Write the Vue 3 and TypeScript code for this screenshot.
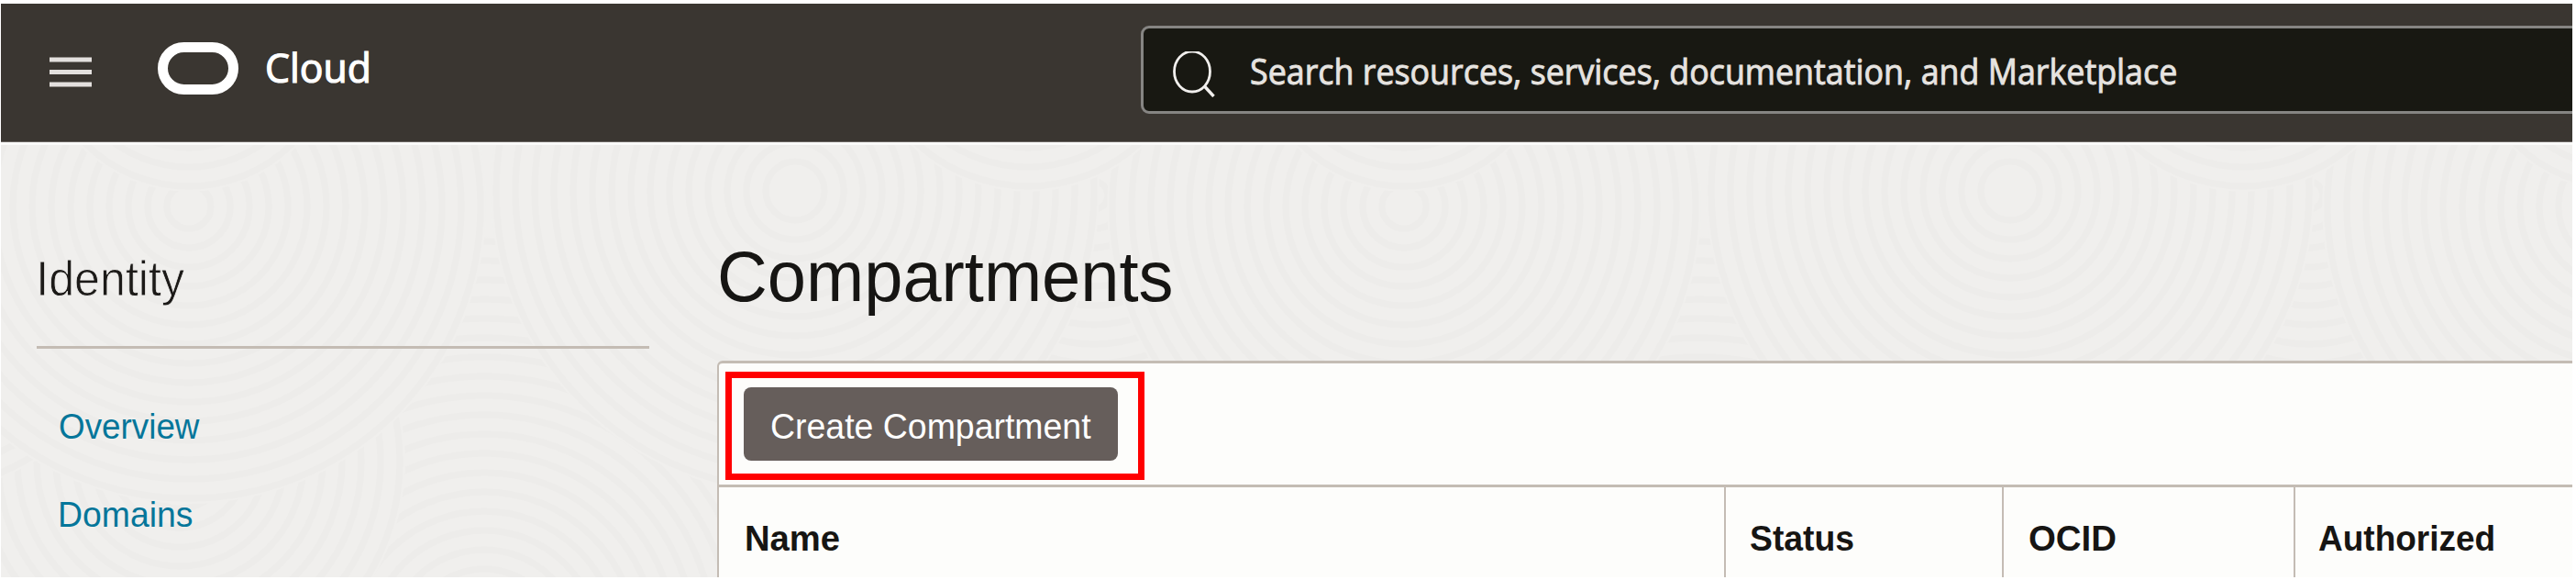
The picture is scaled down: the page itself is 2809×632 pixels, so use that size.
<script setup lang="ts">
interface TextFit {
  width: number
}

interface RingCluster {
  x: number
  y: number
  r: number
}

interface Column {
  label: string
  size: number
  ink: number
  inset: number
}

const navItems = [
  { label: 'Overview', ink: 153, inset: 0 },
  { label: 'Domains', ink: 143.5, inset: 1.5 },
]

const columns: Column[] = [
  { label: 'Name', size: 1098, ink: 101, inset: 29.5 },
  { label: 'Status', size: 302.5, ink: 112, inset: 27 },
  { label: 'OCID', size: 318, ink: 93.5, inset: 28 },
  { label: 'Authorized', size: 304, ink: 191, inset: 25 },
]

// Ring clusters of the engraved page background, painted back to front.
const TILE = 1325
const clusters: RingCluster[] = [
  { x: 527, y: 700, r: 440 },
  { x: 195, y: 500, r: 240 },
  { x: 1192, y: 210, r: 330 },
  { x: 205, y: 222, r: 318 },
  { x: 866, y: 205, r: 326 },
  { x: 205, y: 40, r: 160 },
  { x: 1120, y: 20, r: 180 },
]

function rings(r: number): number[] {
  const out: number[] = []
  for (let v = r; v > 12; v -= 21) out.push(v)
  return out
}

// Scales a label horizontally so that its drawn glyphs span the given width.
const vFit = {
  mounted(el: HTMLElement, binding: { value: TextFit['width'] }) {
    const ctx = document.createElement('canvas').getContext('2d')
    if (!ctx) return
    const cs = getComputedStyle(el)
    ctx.font = `${cs.fontWeight} ${cs.fontSize} ${cs.fontFamily}`
    const m = ctx.measureText(el.textContent ?? '')
    const ink = m.actualBoundingBoxLeft + m.actualBoundingBoxRight
    const scale = binding.value / ink
    el.style.transform = `translateX(${m.actualBoundingBoxLeft * scale}px) scaleX(${scale})`
  },
}
</script>

<template>
  <div class="page">
    <header class="topbar">
      <svg class="menu" width="46" height="34" viewBox="0 0 46 34">
        <path d="M0 3h46M0 16.5h46M0 30h46" stroke="#e3e0de" stroke-width="5.2" />
      </svg>
      <svg class="logo" width="88" height="57" viewBox="0 0 88 57">
        <rect x="5.5" y="5.5" width="77" height="46" rx="23" fill="none" stroke="#fff" stroke-width="11" />
      </svg>
      <div class="brand"><span v-fit="110.5" class="fit">Cloud</span></div>
      <div class="search">
        <svg class="glass" width="48" height="50" viewBox="0 0 48 50">
          <ellipse cx="21" cy="22" rx="19.5" ry="22" fill="none" stroke="#f1efed" stroke-width="2.8" />
          <path d="M34 37.5L44.500 49" stroke="#f1efed" stroke-width="3.4" />
        </svg>
        <div class="hint"><span v-fit="1009" class="fit">Search resources, services, documentation, and Marketplace</span></div>
      </div>
    </header>

    <div class="body">
      <svg class="texture" width="2804" height="474">
        <defs>
          <pattern id="engraving" :width="TILE" height="640" patternUnits="userSpaceOnUse" y="-155">
            <g v-for="(c, i) in clusters" :key="i">
              <g v-for="shift in [-TILE, 0, TILE]" :key="shift">
                <circle :cx="c.x + shift" :cy="c.y" :r="c.r + 6" fill="#f0efed" />
                <circle
                  v-for="r in rings(c.r)"
                  :key="r"
                  :cx="c.x + shift"
                  :cy="c.y"
                  :r="r"
                  fill="none"
                  stroke="#edecea"
                  stroke-width="7"
                />
              </g>
            </g>
          </pattern>
        </defs>
        <rect width="2804" height="474" fill="url(#engraving)" />
      </svg>

      <nav class="side">
        <h2 class="side-title"><span v-fit="158.5" class="fit">Identity</span></h2>
        <ul class="links">
          <li v-for="item in navItems" :key="item.label">
            <a class="link" :style="{ paddingLeft: item.inset + 'px' }">
              <span v-fit="item.ink" class="fit">{{ item.label }}</span>
            </a>
          </li>
        </ul>
      </nav>

      <main class="main">
        <h1 class="title"><span v-fit="492" class="fit">Compartments</span></h1>
        <section class="panel">
          <div class="toolbar">
            <div class="callout">
              <button class="create"><span v-fit="349" class="fit">Create Compartment</span></button>
            </div>
          </div>
          <div class="thead">
            <div
              v-for="col in columns"
              :key="col.label"
              class="th"
              :style="{ width: col.size + 'px', paddingLeft: col.inset + 'px' }"
            >
              <span v-fit="col.ink" class="fit">{{ col.label }}</span>
            </div>
          </div>
        </section>
      </main>
    </div>
  </div>
</template>

<style>
body {
  margin: 0;
  background: #fff;
}
</style>

<style scoped>
.page {
  box-sizing: border-box;
  width: 2809px;
  height: 632px;
  padding: 4px 4px 3px 1px;
  overflow: hidden;
  background: #fff;
  font-family: "Liberation Sans", Arial, sans-serif;
  color: #161513;
}
.fit {
  display: inline-block;
  white-space: nowrap;
  transform-origin: left center;
}
.topbar {
  display: flex;
  box-sizing: border-box;
  height: 151px;
  overflow: hidden;
  background: #3a3631;
  border-bottom: 1px solid #6b6663;
}
.menu {
  flex: none;
  margin: 57.5px 0 0 53px;
}
.logo {
  flex: none;
  margin: 42px 0 0 71.5px;
}
.brand {
  flex: none;
  width: 953.5px;
  margin-left: 31px;
  font: 400 43px/139px "Open Sans", sans-serif;
  color: #fff;
  -webkit-text-stroke: 1.2px #fff;
}
.search {
  display: flex;
  flex: none;
  box-sizing: border-box;
  width: 1600px;
  height: 96px;
  margin-top: 24px;
  border: 3px solid #868583;
  border-radius: 9px;
  background: #181812;
}
.glass {
  flex: none;
  margin: 25px 0 0 31.5px;
}
.hint {
  margin-left: 37px;
  font: 400 38px/93px "Open Sans", sans-serif;
  color: #e6e3e0;
  -webkit-text-stroke: 0.9px #e6e3e0;
}
.body {
  position: relative;
  display: flex;
  box-sizing: border-box;
  height: 474px;
  overflow: hidden;
  background: #f0efed;
  border-top: 3px solid #fafaf9;
}
.texture {
  position: absolute;
  top: 0;
  left: 0;
}
.side {
  position: relative;
  flex: none;
  width: 668px;
  margin-left: 39px;
  padding-top: 116px;
}
.side-title {
  height: 103px;
  margin: 0;
  padding-left: 2.5px;
  border-bottom: 3px solid #c4bcb4;
  font-size: 53px;
  font-weight: 400;
  line-height: 60px;
  color: #1c1a18;
  -webkit-text-stroke: 0.8px #f0efed;
}
.links {
  margin: 37px 0 0;
  padding: 0 0 0 24.500px;
  list-style: none;
}
.link {
  display: block;
  height: 96px;
  font-size: 38px;
  line-height: 96px;
  color: #05769a;
}
.main {
  position: relative;
  flex: none;
  width: 2040px;
  margin-left: 74px;
  padding-top: 98px;
}
.title {
  height: 137px;
  margin: 0;
  padding-left: 3px;
  font-size: 77px;
  font-weight: 400;
  line-height: 90px;
}
.panel {
  box-sizing: border-box;
  height: 260px;
  border: 2px solid #c4bcb4;
  border-top-width: 3px;
  border-radius: 6px;
  background: #fdfdfb;
}
.toolbar {
  height: 120px;
  padding: 12px 0 0 7px;
  box-sizing: content-box;
  border-bottom: 3px solid #c4bcb4;
}
.callout {
  box-sizing: border-box;
  width: 457px;
  height: 118px;
  margin-top: -3px;
  padding: 10px 0 0 13px;
  border: 7px solid #f00;
}
.create {
  display: block;
  box-sizing: border-box;
  width: 408px;
  height: 80px;
  padding: 5px 0 0 30px;
  border: 0;
  border-radius: 8px;
  background: #665e5b;
  color: #fff;
  font: 400 38px/76px "Liberation Sans", Arial, sans-serif;
  text-align: left;
}
.thead {
  display: flex;
}
.th {
  flex: none;
  box-sizing: border-box;
  height: 110px;
  padding-top: 28px;
  border-right: 2px solid #c4bcb4;
  font-size: 38px;
  font-weight: 700;
  line-height: 56px;
}
.th:last-child {
  border-right: 0;
}
</style>
